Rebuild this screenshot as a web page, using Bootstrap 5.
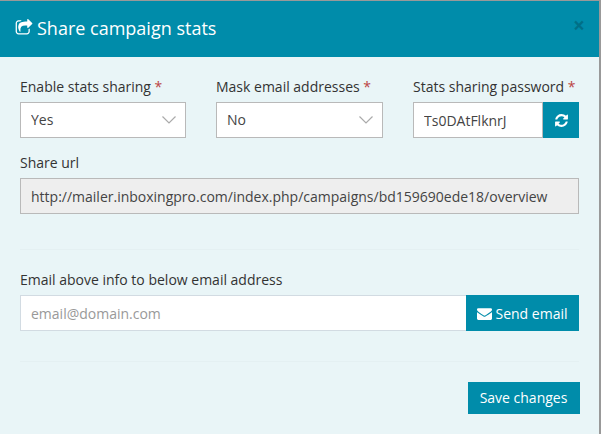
<!DOCTYPE html>
<html lang="en"><head><meta charset="utf-8">
<link href="https://cdn.jsdelivr.net/npm/bootstrap@5.3.0/dist/css/bootstrap.min.css" rel="stylesheet">
<style>
body{background:#e9f5f7;font-family:"Open Sans",sans-serif;font-size:14px;color:#333;overflow:hidden}
.shell{width:601px;height:434px;border-top:1px solid #999;border-right:2px solid #999;background:#e9f5f7}
.head{background:#008caa;height:56px;padding:0 15px;color:#fff}
.head-title{font-size:18px;line-height:1;margin:0 0 2px;font-weight:400}
.closer{font-size:21px;font-weight:700;line-height:1;color:#000;opacity:.2;background:none;border:0;padding:0;position:relative;top:-4px;margin-right:-1px}
.body-wrap{padding:20px 20px 0}
.fld-label{margin-bottom:5px;line-height:20px;display:block;color:#333}
.req{color:#b44}
.fld{display:block;width:100%;height:36px;border:1px solid #b9b9b9;background:#fff;padding:6px 10px;color:#444;font-size:14px;border-radius:0;line-height:22px}
.fld-ro{background:#eee}
.pick{appearance:none;background:#fff url("data:image/svg+xml,%3Csvg xmlns='http://www.w3.org/2000/svg' width='14' height='8'%3E%3Cpath d='M.5.5l6.500 6.500L13.500.5' fill='none' stroke='%23aaa' stroke-width='1.200'/%3E%3C/svg%3E") no-repeat right 9px center}
.topline{display:flex;gap:30px;margin-bottom:15px}
.c1,.c3{width:166px}.c2{width:167px}
.btn-teal{background:#008caa;color:#fff;border:0;border-radius:0;font-size:14px}
.btn-teal:hover{background:#008caa;color:#fff}
.square{width:36px;height:36px;padding:0}
.mail-in{border-color:#d2dbe2;border-right:0}
.mail-in::placeholder{color:#999}
.send{width:113px;height:36px;padding:0 1px 0 0}
.sep{height:1px;background:#e4f0f2}
.sep1{margin:35px 0 20px}
.sep2{margin:30px 0 20px}
.save{width:112px;height:32px;padding:0 1px 2px 0;margin-right:-1px}
</style></head><body>
<div class="shell">
<div class="head d-flex align-items-center justify-content-between">
<h4 class="head-title d-flex align-items-center gap-1">
<svg width="18" height="18" viewBox="0 0 1792 1792"><path fill="#fff" d="M1472 989v259q0 119-84.500 203.500t-203.500 84.500h-832q-119 0-203.500-84.500t-84.500-203.500v-832q0-119 84.500-203.500t203.500-84.500h255q13 0 22.500 9.500t9.500 22.500q0 27-26 32-77 26-133 60-10 4-16 4h-112q-66 0-113 47t-47 113v832q0 66 47 113t113 47h832q66 0 113-47t47-113v-214q0-19 18-29 28-13 54-37 16-16 35-8 21 9 21 29zm237-496l-384 384q-18 19-45 19-12 0-25-5-39-17-39-59v-192h-160q-323 0-438 131-119 137-74 473 3 23-20 34-8 2-12 2-16 0-26-13-10-14-21-31t-39.500-68.500-49.500-99-38.500-114-17.500-122.500q0-49 3.500-91t14-90 28-88 47-81.500 68.500-74 94.500-61.500 124.500-48.500 159.500-30.500 196.500-11h160v-192q0-42 39-59 13-5 25-5 26 0 45 19l384 384q19 19 19 45t-19 45z"/></svg>
Share campaign stats</h4>
<button class="closer" type="button">×</button>
</div>
<div class="body-wrap">
<div class="topline">
<div class="c1"><label class="fld-label">Enable stats sharing <span class="req">*</span></label><select class="fld pick"><option>Yes</option></select></div>
<div class="c2"><label class="fld-label">Mask email addresses <span class="req">*</span></label><select class="fld pick"><option>No</option></select></div>
<div class="c3"><label class="fld-label">Stats sharing password <span class="req">*</span></label>
<div class="d-flex"><input class="fld" value="Ts0DAtFlknrJ"><button class="btn btn-teal square flex-shrink-0 d-flex align-items-center justify-content-center" type="button"><svg width="15" height="15" viewBox="0 0 1792 1792"><path fill="#fff" d="M1639 1056q0 5-1 7-64 268-268 434.500t-478 166.500q-146 0-282.500-55t-243.500-157l-129 129q-19 19-45 19t-45-19-19-45v-448q0-26 19-45t45-19h448q26 0 45 19t19 45-19 45l-137 137q71 66 161 102t187 36q134 0 250-65t186-179q11-17 53-117 8-23 30-23h192q13 0 22.500 9.500t9.500 22.500zm25-800v448q0 26-19 45t-45 19h-448q-26 0-45-19t-19-45 19-45l138-138q-148-137-349-137-134 0-250 65t-186 179q-11 17-53 117-8 23-30 23h-199q-13 0-22.500-9.500t-9.500-22.500v-7q65-268 270-434.500t480-166.500q146 0 284 55.500t245 156.500l130-129q19-19 45-19t45 19 19 45z"/></svg></button></div></div>
</div>
<label class="fld-label">Share url</label>
<input class="fld fld-ro" readonly value="http://mailer.inboxingpro.com/index.php/campaigns/bd159690ede18/overview">
<div class="sep sep1"></div>
<label class="fld-label">Email above info to below email address</label>
<div class="d-flex"><input class="fld mail-in" placeholder="email@domain.com"><button class="btn btn-teal send flex-shrink-0 d-flex align-items-center justify-content-center gap-1" type="button"><svg width="15" height="15" viewBox="0 0 1792 1792"><path fill="#fff" d="M1792 710v794q0 66-47 113t-113 47h-1472q-66 0-113-47t-47-113v-794q44 49 101 87 362 246 497 345 57 42 92.500 65.500t94.500 48 110 24.500h2q51 0 110-24.500t94.500-48 92.500-65.500q170-123 498-345 57-39 100-87zm0-294q0 79-49 151t-122 123q-376 261-468 325-10 7-42.500 30.500t-54 38-52 32.500-57.500 27-50 9h-2q-23 0-50-9t-57.500-27-52-32.500-54-38-42.500-30.500q-91-64-262-182.500t-205-142.500q-62-42-117-115.500t-55-136.500q0-78 41.500-130t118.500-52h1472q65 0 112.500 47t47.500 113z"/></svg>Send email</button></div>
<div class="sep sep2"></div>
<div class="d-flex justify-content-end"><button class="btn btn-teal save" type="button">Save changes</button></div>
</div>
</div>
</body></html>
